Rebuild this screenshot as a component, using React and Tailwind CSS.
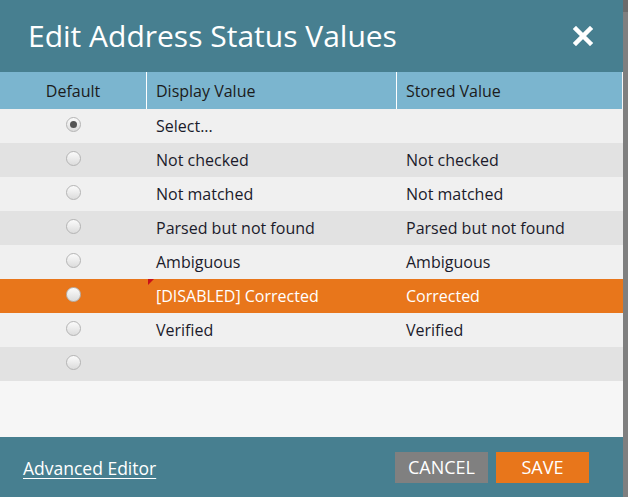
import React from 'react';

const rows = [
  { display: 'Select...', stored: '', checked: true },
  { display: 'Not checked', stored: 'Not checked' },
  { display: 'Not matched', stored: 'Not matched' },
  { display: 'Parsed but not found', stored: 'Parsed but not found' },
  { display: 'Ambiguous', stored: 'Ambiguous' },
  { display: '[DISABLED] Corrected', stored: 'Corrected', active: true },
  { display: 'Verified', stored: 'Verified' },
  { display: '', stored: '' },
];

const Radio = ({ checked }) => (
  <span className="w-[15px] h-[15px] rounded-full border border-[#b4b4b4] bg-gradient-to-b from-[#fbfbfb] to-[#dcdcdc] flex items-center justify-center">
    {checked && <span className="w-[7px] h-[7px] rounded-full bg-[#555]" />}
  </span>
);

export default function App() {
  return (
    <div className="flex w-[628px] h-[497px] overflow-hidden" style={{ fontFamily: "'Open Sans', sans-serif" }}>
      <div className="w-[623px] h-full flex flex-col bg-[#f6f6f6]">
        {/* Title bar */}
        <div className="h-[72px] bg-[#477f90] flex items-center justify-between pl-[28px] pr-[30px]">
          <h1 className="text-[30px] text-white leading-none">Edit Address Status Values</h1>
          <button className="w-[20px] h-[20px] flex items-center justify-center">
            <svg viewBox="0 0 20 20" className="w-[20px] h-[20px]">
              <path d="M3 3 L17 17 M17 3 L3 17" stroke="white" strokeWidth="4.5" strokeLinecap="square" />
            </svg>
          </button>
        </div>

        {/* Table header */}
        <div className="h-[37px] bg-[#7bb5cf] flex text-[16px] text-[#1b1b1b] mr-[1px]">
          <div className="w-[147px] flex items-center justify-center border-r border-white">Default</div>
          <div className="w-[250px] flex items-center pl-[9px] border-r border-white">Display Value</div>
          <div className="flex-1 flex items-center pl-[9px]">Stored Value</div>
        </div>

        {/* Rows */}
        <div className="flex flex-col">
          {rows.map((r, i) => (
            <div
              key={i}
              className={`h-[34px] flex text-[16px] ${
                r.active ? 'bg-[#e8761b] text-white' : i % 2 === 0 ? 'bg-[#f0f0f0] text-[#1b1b2b]' : 'bg-[#e2e2e2] text-[#1b1b2b]'
              }`}
            >
              <div className="w-[147px] flex items-center justify-center pb-[3px]">
                <Radio checked={r.checked} />
              </div>
              <div className="relative w-[250px] flex items-center pl-[9px]">
                {r.active && (
                  <span className="absolute left-[1px] top-0 w-0 h-0 border-t-[6px] border-t-[#c8101a] border-r-[6px] border-r-transparent" />
                )}
                {r.display}
              </div>
              <div className="flex-1 flex items-center pl-[9px]">{r.stored}</div>
            </div>
          ))}
        </div>

        <div className="flex-1" />

        {/* Footer */}
        <div className="h-[60px] bg-[#477f90] flex items-center justify-between pl-[23px] pr-[34px]">
          <a href="#" className="text-white text-[17.5px] underline underline-offset-[3px] pt-[2px]">Advanced Editor</a>
          <div className="flex gap-[8px]">
            <button className="w-[93px] h-[31px] bg-[#808080] text-white text-[18px]">CANCEL</button>
            <button className="w-[93px] h-[31px] bg-[#e8761b] text-white text-[18px]">SAVE</button>
          </div>
        </div>
      </div>
      <div className="w-[5px] h-full bg-[#7f7f7f] flex flex-col">
        <div className="h-[12px] bg-[#6b6b6b]" />
      </div>
    </div>
  );
}
